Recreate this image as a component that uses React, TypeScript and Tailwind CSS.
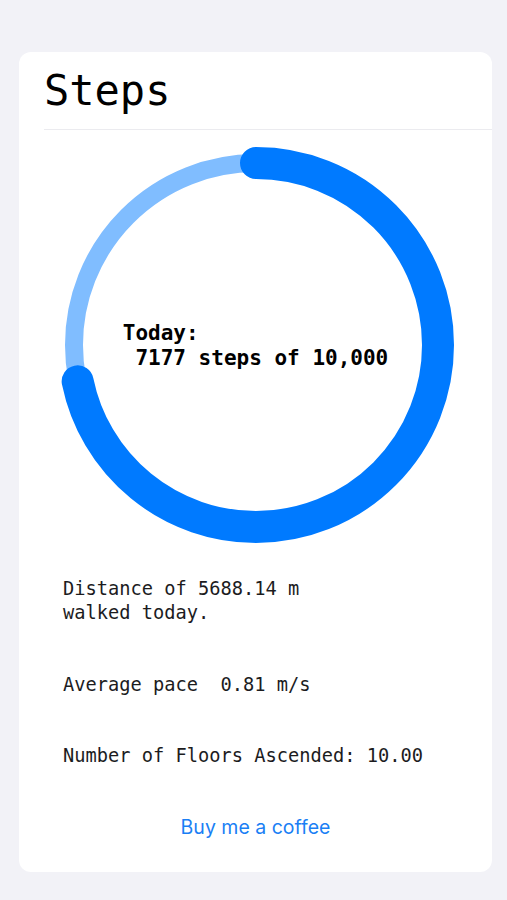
import React from "react";

const mono = { fontFamily: '"DejaVu Sans Mono", "Liberation Mono", monospace' };

function Ring() {
  const cx = 198;
  const cy = 198;
  const r = 182;
  const progress = 7177 / 10000;
  const circ = 2 * Math.PI * r;
  return (
    <svg width="396" height="396" viewBox="0 0 396 396" className="block">
      <circle cx={cx} cy={cy} r={r} fill="none" stroke="#80bdff" strokeWidth="18" />
      <circle
        cx={cx}
        cy={cy}
        r={r}
        fill="none"
        stroke="#007aff"
        strokeWidth="32"
        strokeLinecap="round"
        strokeDasharray={`${circ * progress} ${circ}`}
        transform={`rotate(-90 ${cx} ${cy})`}
      />
    </svg>
  );
}

export default function App() {
  return (
    <div className="min-h-[900px] w-full bg-[#f2f2f7] pt-[52px] pl-[19px]">
      <div className="w-[473px] h-[820px] bg-white rounded-[12px] overflow-hidden flex flex-col">
        <div className="pl-[25px] pt-[15px] h-[77px] ">
          <div className="text-[42px] leading-[48px] text-black" style={mono}>
            Steps
          </div>
        </div>
        <div className="ml-[25px] h-px bg-[#ebebef]" />
        <div className="relative mx-auto mt-[17px] w-[396px] h-[396px]">
          <Ring />
          <div className="absolute inset-0 flex items-center justify-center">
            <div
              className="whitespace-pre text-[21px] leading-[25px] font-bold text-black mt-[2px]"
              style={mono}
            >
              {"Today:\n 7177 steps of 10,000"}
            </div>
          </div>
        </div>
        <div className="pl-[44px] pt-[34px] text-[18.7px] leading-[24px] text-[#1c1c1e]" style={mono}>
          <div>
            Distance of 5688.14 m
            <br />
            walked today.
          </div>
          <div className="mt-[48px] whitespace-pre">Average pace  0.81 m/s</div>
          <div className="mt-[47px]">Number of Floors Ascended: 10.00</div>
        </div>
        <div
          className="mt-[45px] text-center text-[19.5px] leading-[28px] text-[#1a7ff5]"
          style={{ fontFamily: 'Inter, "Noto Sans", sans-serif' }}
        >
          Buy me a coffee
        </div>
      </div>
    </div>
  );
}
